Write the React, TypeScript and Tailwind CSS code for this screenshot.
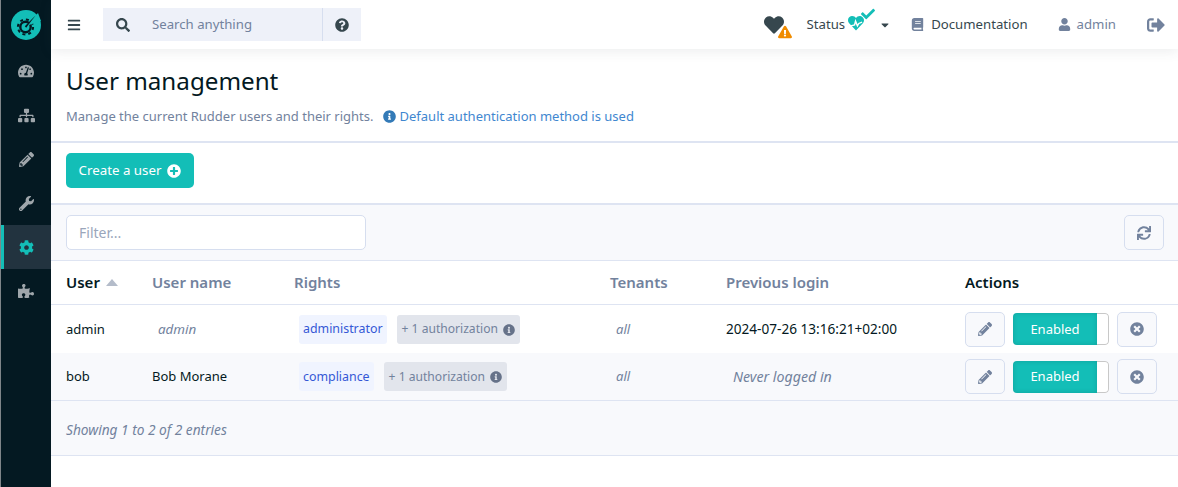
import { FC, ReactNode } from 'react';
import {
  FaTachometerAlt,
  FaSitemap,
  FaPencilAlt,
  FaWrench,
  FaCog,
  FaPuzzlePiece,
  FaBars,
  FaSearch,
  FaQuestionCircle,
  FaHeart,
  FaExclamationTriangle,
  FaCheck,
  FaCaretDown,
  FaBook,
  FaUser,
  FaSignOutAlt,
  FaInfoCircle,
  FaPlusCircle,
  FaSync,
  FaTimesCircle,
} from 'react-icons/fa';

const users = [
  { login: 'admin', name: 'admin', nameItalic: true, role: 'administrator', last: '2024-07-26 13:16:21+02:00', lastItalic: false },
  { login: 'bob', name: 'Bob Morane', nameItalic: false, role: 'compliance', last: 'Never logged in', lastItalic: true },
];

const SideItem: FC<{ icon: ReactNode; active?: boolean }> = ({ icon, active }) => (
  <div
    className={
      active
        ? 'h-[44px] flex items-center justify-center bg-[#22333f] text-[#13beb7] border-l-[3px] border-[#13beb7] pr-[3px]'
        : 'h-[44px] flex items-center justify-center text-[#9fa6ab]'
    }
  >
    {icon}
  </div>
);

const Logo = () => (
  <svg width="30" height="30" viewBox="0 0 30 30">
    <circle cx="15" cy="15" r="15" fill="#13beb7" />
    <circle cx="14.5" cy="17" r="7.6" fill="none" stroke="#041922" strokeWidth="2" strokeDasharray="3 3" />
    <circle cx="14.5" cy="17" r="5.2" fill="none" stroke="#041922" strokeWidth="2.4" />
    <path d="M15 16 L27 3 L30 11 L21 14 Z" fill="#13beb7" />
    <path d="M13.8 16.2 L24.5 5.5 L15.2 17.8 Z" fill="#041922" />
  </svg>
);

// heart with a pulse line through it, next to the Status label
const StatusHeart = () => (
  <svg width="16" height="16" viewBox="0 0 17 16">
    <path d="M8.5 16 L1 8 C-1 5.5 0 1 4 0.5 C6 0.3 7.5 1.2 8.5 2.6 C9.5 1.2 11 0.3 13 0.5 C17 1 18 5.5 16 8 Z" fill="#13beb7" />
    <path d="M3 11 L7 10 L8 6 L10 11 L11.5 8.5 L15 7" fill="none" stroke="#ffffff" strokeWidth="1.5" />
  </svg>
);

const TableHead: FC<{ w: string; children: ReactNode; dark?: boolean }> = ({ w, children, dark }) => (
  <div className={`${w} pl-[15px] font-semibold text-[15px] ${dark ? 'text-[#041922]' : 'text-[#72829d]'}`}>{children}</div>
);

const App: FC = () => {
  return (
    <div className="flex h-[487px] w-[1178px] overflow-hidden bg-white text-[14px] text-[#36474e] font-['Noto_Sans',sans-serif]">
      <aside className="w-[51px] shrink-0 bg-[#041922] border-l border-[#7f8589]">
        <div className="h-[49px] flex items-center justify-center pr-[1px]">
          <Logo />
        </div>
        <div>
          <SideItem icon={<FaTachometerAlt size={16} />} />
          <SideItem icon={<FaSitemap size={17} />} />
          <SideItem icon={<FaPencilAlt size={15} />} />
          <SideItem icon={<FaWrench size={15} />} />
          <SideItem icon={<FaCog size={15} />} active />
          <SideItem icon={<FaPuzzlePiece size={16} />} />
        </div>
      </aside>

      <main className="flex-1 min-w-0 flex flex-col">
        <header className="h-[49px] shrink-0 flex items-center text-[13.2px] shadow-[0_2px_12px_rgba(54,71,78,0.1)] relative">
          <div className="pl-[16px] w-[52px]">
            <FaBars size={14} className="text-[#36474e]" />
          </div>
          <div className="h-[33px] w-[258px] bg-[#eef1f9] flex items-center">
            <div className="w-[49px] flex justify-center pr-[9px]">
              <FaSearch size={14} className="text-[#36474e]" />
            </div>
            <span className="flex-1 text-[#72829d]">Search anything</span>
            <div className="w-[39px] h-full border-l border-[#d6deef] flex items-center justify-center">
              <FaQuestionCircle size={14} className="text-[#36474e]" />
            </div>
          </div>

          <div className="flex-1" />

          <div className="relative w-[30px] h-[20px] mr-[13px]">
            <FaHeart size={20} className="text-[#36474e]" />
            <FaExclamationTriangle size={14} className="absolute left-[14px] top-[10px] text-[#f08c00]" />
          </div>
          <span>Status</span>
          <div className="relative w-[33px] h-[20px] ml-[3px]">
            <span className="absolute left-0 top-0">
              <StatusHeart />
            </span>
            <FaCheck size={14} stroke="#ffffff" strokeWidth={70} className="absolute left-[13px] top-[-8px] text-white" />
            <FaCheck size={14} className="absolute left-[13px] top-[-8px] text-[#13beb7]" />
          </div>
          <FaCaretDown size={12} className="text-[#36474e] mr-[20px] ml-[-2px]" />
          <FaBook size={13} className="text-[#72829d] mr-[7px]" />
          <span>Documentation</span>
          <FaUser size={13} className="text-[#72829d] ml-[30px] mr-[6px]" />
          <span className="text-[#72829d]">admin</span>
          <FaSignOutAlt size={18} className="text-[#72829d] ml-[31px] mr-[13px]" />
        </header>

        <section className="h-[94px] shrink-0 px-[15px] pt-[14px] border-b-2 border-[#dee4f2]">
          <h1 className="text-[24.2px] leading-[36px] text-[#041922]">User management</h1>
          <p className="mt-[7px] text-[13px] leading-[20px] text-[#72829d] flex items-center">
            Manage the current Rudder users and their rights.
            <FaInfoCircle size={13} className="text-[#337ab7] ml-[9px] mr-[4px]" />
            <span className="text-[#3f87d0]">Default authentication method is used</span>
          </p>
        </section>

        <section className="h-[62px] shrink-0 px-[15px] pt-[10px] border-b-2 border-[#dee4f2]">
          <button className="h-[35px] w-[128px] pt-[1px] rounded-[5px] bg-[#13beb7] text-white text-[13.3px] flex items-center justify-center gap-[6px]">
            Create a user
            <FaPlusCircle size={14} />
          </button>
        </section>

        <section className="h-[56px] shrink-0 pl-[15px] pr-[14px] flex items-center justify-between bg-[#f8f9fc] border-b border-[#dee4f2]">
          <div className="h-[35px] w-[300px] rounded-[5px] bg-white border border-[#d6deef] flex items-center pl-[12px] text-[14px] text-[#9aa6bb]">
            Filter...
          </div>
          <div className="h-[35px] w-[40px] rounded-[5px] bg-[#f8f9fc] border border-[#d6deef] flex items-center justify-center">
            <FaSync size={14} className="text-[#72829d]" />
          </div>
        </section>

        <div className="h-[44px] shrink-0 flex items-center border-b border-[#dee4f2]">
          <TableHead w="w-[86px]" dark>
            <span className="flex items-center gap-[6px]">
              User
              <svg width="12" height="7" viewBox="0 0 12 7">
                <path d="M6 0 L12 7 L0 7 Z" fill="#b4bcca" />
              </svg>
            </span>
          </TableHead>
          <TableHead w="w-[142px]">User name</TableHead>
          <TableHead w="w-[316px]">Rights</TableHead>
          <TableHead w="w-[116px]">Tenants</TableHead>
          <TableHead w="w-[239px]">Previous login</TableHead>
          <TableHead w="w-[228px]" dark>Actions</TableHead>
        </div>

        {users.map((user, index) => (
          <div
            key={user.login}
            className={`shrink-0 flex items-center text-[13px] text-[#041922] ${index === 1 ? 'h-[47px] bg-[#f8f9fc]' : 'h-[48px]'}`}
          >
            <div className="w-[86px] pl-[15px] pt-[1px]">{user.login}</div>
            <div className={`w-[142px] pt-[1px] ${user.nameItalic ? 'pl-[21px] italic text-[13.4px] text-[#72829d]' : 'pl-[15px]'}`}>{user.name}</div>
            <div className="w-[316px] pl-[20px] flex items-center gap-[10px]">
              <span className="h-[29px] px-[4px] pt-[1px] rounded-[3px] bg-[#f0f4ff] text-[#3558d6] text-[12.4px] flex items-center">{user.role}</span>
              <span className="h-[29px] px-[5px] pt-[1px] rounded-[3px] bg-[#e2e5ec] text-[#72829d] text-[12.1px] flex items-center gap-[5px]">
                + 1 authorization
                <FaInfoCircle size={12} className="text-[#667289]" />
              </span>
            </div>
            <div className="w-[116px] pl-[21px] pt-[1px] italic text-[#72829d]">all</div>
            <div className={`w-[239px] pt-[1px] ${user.lastItalic ? 'pl-[22px] italic text-[14.2px] text-[#72829d]' : 'pl-[15px] text-[13.6px]'}`}>{user.last}</div>
            <div className="w-[228px] pl-[15px] flex items-center gap-[8px]">
              <div className="h-[35px] w-[40px] rounded-[5px] bg-[#f8f9fc] border border-[#d6deef] flex items-center justify-center">
                <FaPencilAlt size={14} className="text-[#72829d]" />
              </div>
              <div className="h-[32px] w-[96px] flex rounded-[4px] overflow-hidden">
                <div className="w-[84px] pt-[1px] bg-[#13beb7] shadow-[inset_0_0_5px_rgba(0,0,0,0.15)] text-white flex items-center justify-center">Enabled</div>
                <div className="flex-1 bg-white border border-l-0 border-[#c8c8c8] rounded-r-[4px]" />
              </div>
              <div className="h-[35px] w-[40px] rounded-[5px] bg-[#f8f9fc] border border-[#d6deef] flex items-center justify-center">
                <FaTimesCircle size={14} className="text-[#72829d]" />
              </div>
            </div>
          </div>
        ))}

        <footer className="h-[56px] shrink-0 px-[15px] pt-[5px] flex items-center italic text-[13.7px] text-[#72829d] bg-[#f8f9fc] border-y border-[#dee4f2]">
          Showing 1 to 2 of 2 entries
        </footer>
      </main>
    </div>
  );
};

export default App;
